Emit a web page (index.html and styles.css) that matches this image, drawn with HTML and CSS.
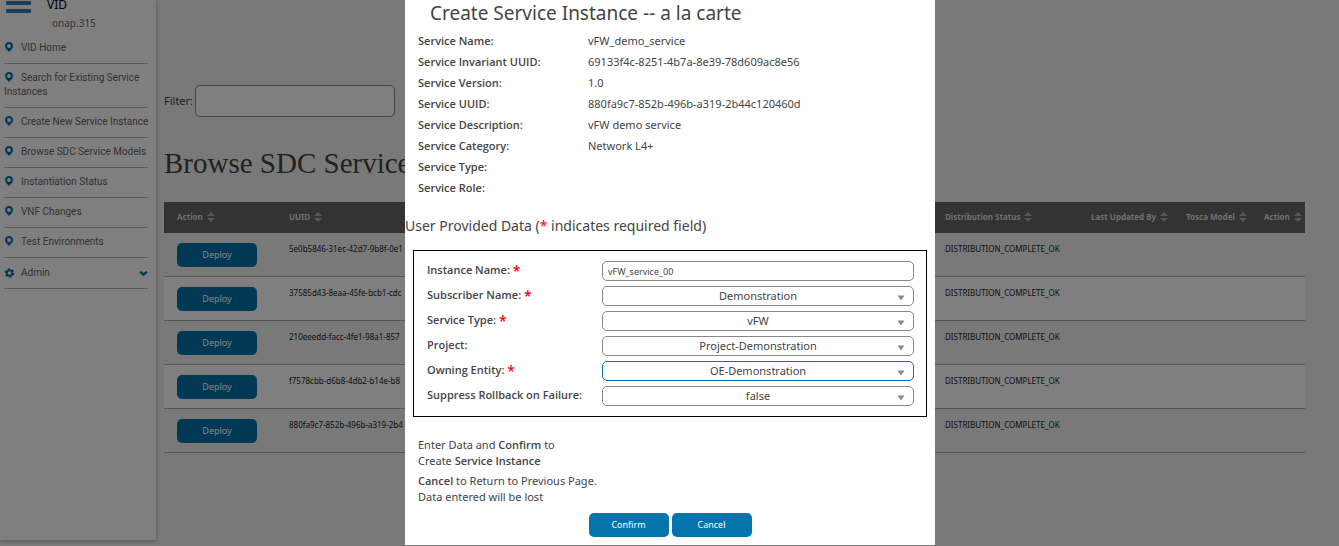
FILE: index.html
```html
<!DOCTYPE html>
<html lang="en">
<head>
<meta charset="utf-8">
<title>VID</title>
<link rel="stylesheet" href="styles.css">
</head>
<body>
<svg class="defs" aria-hidden="true">
  <symbol id="pin" viewBox="0 0 10 12"><path fill-rule="evenodd" d="M5 1C2.700 1 1 2.700 1 4.900C1 7.400 3.300 8.800 5 11C6.700 8.800 9 7.400 9 4.900C9 2.700 7.300 1 5 1ZM5 2.900A1.900 2 0 1 1 5 6.900A1.900 2 0 1 1 5 2.900Z"/></symbol>
  <symbol id="sort" viewBox="0 0 8 12"><path d="M4 1L8 5H0ZM0 7H8L4 11Z"/></symbol>
  <symbol id="arrow" viewBox="0 0 8 6"><path d="M.5 .5H7.500L4 5.500Z"/></symbol>
</svg>
<div class="page">
  <aside class="sidebar">
    <header class="brand">
      <button class="burger" type="button" aria-label="Menu"><span></span><span></span><span></span></button>
      <div class="brand-name">VID</div>
      <div class="brand-user">onap.315</div>
    </header>
    <nav class="menu">
      <a href="#"><svg class="pin"><use href="#pin"/></svg>VID Home</a>
      <a href="#"><svg class="pin"><use href="#pin"/></svg>Search for Existing Service<br>Instances</a>
      <a href="#"><svg class="pin"><use href="#pin"/></svg>Create New Service Instance</a>
      <a href="#"><svg class="pin"><use href="#pin"/></svg>Browse SDC Service Models</a>
      <a href="#"><svg class="pin"><use href="#pin"/></svg>Instantiation Status</a>
      <a href="#"><svg class="pin"><use href="#pin"/></svg>VNF Changes</a>
      <a href="#"><svg class="pin"><use href="#pin"/></svg>Test Environments</a>
      <a class="admin" href="#"><svg class="pin gear" viewBox="0 0 12 12"><circle cx="6" cy="6" r="3" fill="none" stroke="#0574ac" stroke-width="2"/><circle cx="6" cy="6" r="4.300" fill="none" stroke="#0574ac" stroke-width="2" stroke-dasharray="2.250 2.250"/></svg><span>Admin</span><svg class="chevron" viewBox="0 0 8 6"><path d="M1 1.300L4 4L7 1.300"/></svg></a>
    </nav>
  </aside>
  <main class="content">
    <div class="filter"><label for="filter">Filter:</label><input id="filter" type="text"></div>
    <h1>Browse SDC Service</h1>
    <table class="models">
      <colgroup><col class="c-action"><col><col class="c-status"><col class="c-updated"><col class="c-tosca"><col class="c-last"></colgroup>
      <thead><tr>
        <th>Action<svg><use href="#sort"/></svg></th><th>UUID<svg><use href="#sort"/></svg></th><th>Distribution Status<svg><use href="#sort"/></svg></th><th>Last Updated By<svg><use href="#sort"/></svg></th><th>Tosca Model<svg><use href="#sort"/></svg></th><th>Action<svg><use href="#sort"/></svg></th>
      </tr></thead>
      <tbody>
        <tr><td><button class="btn" type="button">Deploy</button></td><td>5e0b5846-31ec-42d7-9b8f-0e1</td><td>DISTRIBUTION_COMPLETE_OK</td><td></td><td></td><td></td></tr>
        <tr><td><button class="btn" type="button">Deploy</button></td><td>37585d43-8eaa-45fe-bcb1-cdc</td><td>DISTRIBUTION_COMPLETE_OK</td><td></td><td></td><td></td></tr>
        <tr><td><button class="btn" type="button">Deploy</button></td><td>210eeedd-facc-4fe1-98a1-857</td><td>DISTRIBUTION_COMPLETE_OK</td><td></td><td></td><td></td></tr>
        <tr><td><button class="btn" type="button">Deploy</button></td><td>f7578cbb-d6b8-4db2-b14e-b8</td><td>DISTRIBUTION_COMPLETE_OK</td><td></td><td></td><td></td></tr>
        <tr><td><button class="btn" type="button">Deploy</button></td><td>880fa9c7-852b-496b-a319-2b4</td><td>DISTRIBUTION_COMPLETE_OK</td><td></td><td></td><td></td></tr>
      </tbody>
    </table>
  </main>
</div>
<div class="overlay">
  <div class="modal" role="dialog" aria-modal="true" aria-labelledby="title">
    <h2 id="title">Create Service Instance -- a la carte</h2>
    <dl class="info">
      <dt>Service Name:</dt><dd>vFW_demo_service</dd>
      <dt>Service Invariant UUID:</dt><dd>69133f4c-8251-4b7a-8e39-78d609ac8e56</dd>
      <dt>Service Version:</dt><dd>1.0</dd>
      <dt>Service UUID:</dt><dd>880fa9c7-852b-496b-a319-2b44c120460d</dd>
      <dt>Service Description:</dt><dd>vFW demo service</dd>
      <dt>Service Category:</dt><dd>Network L4+</dd>
      <dt>Service Type:</dt><dd></dd>
      <dt>Service Role:</dt><dd></dd>
    </dl>
    <h3>User Provided Data (<span class="req">*</span> indicates required field)</h3>
    <form class="fields">
      <label for="name">Instance Name: <span class="req">*</span></label>
      <input id="name" class="control" type="text" value="vFW_service_00">
      <label for="subscriber">Subscriber Name: <span class="req">*</span></label>
      <div class="pick"><select id="subscriber" class="control"><option>Demonstration</option></select><svg><use href="#arrow"/></svg></div>
      <label for="type">Service Type: <span class="req">*</span></label>
      <div class="pick"><select id="type" class="control"><option>vFW</option></select><svg><use href="#arrow"/></svg></div>
      <label for="project">Project:</label>
      <div class="pick"><select id="project" class="control"><option>Project-Demonstration</option></select><svg><use href="#arrow"/></svg></div>
      <label for="owner">Owning Entity: <span class="req">*</span></label>
      <div class="pick"><select id="owner" class="control active"><option>OE-Demonstration</option></select><svg><use href="#arrow"/></svg></div>
      <label for="rollback">Suppress Rollback on Failure:</label>
      <div class="pick"><select id="rollback" class="control"><option>false</option></select><svg><use href="#arrow"/></svg></div>
    </form>
    <div class="notes">
      <p>Enter Data and <b>Confirm</b> to<br>Create <b>Service Instance</b></p>
      <p><b>Cancel</b> to Return to Previous Page.<br>Data entered will be lost</p>
    </div>
    <div class="actions"><button class="btn" type="button">Confirm</button><button class="btn" type="button">Cancel</button></div>
  </div>
</div>
</body>
</html>
```
FILE: styles.css
```css
* { box-sizing: border-box; }
html, body { height: 100%; }
body {
  margin: 0;
  overflow: hidden;
  background: #f2f2f2;
  color: #444;
  font: 11px/16px "Noto Sans", sans-serif;
}
button, input, select { font-family: inherit; color: inherit; }
h1, h2, h3, p, dl, dd { margin: 0; }
.defs { position: absolute; width: 0; height: 0; }

.page { display: flex; height: 100%; }
.sidebar {
  flex: none;
  width: 156px;
  margin-bottom: 6px;
  padding: 0 8px 0 4px;
  background: #fff;
  box-shadow: 0 1px 4px rgba(0, 0, 0, .3);
}
.brand {
  display: grid;
  grid-template-columns: 43px 1fr;
  grid-template-rows: 13px 21px;
  color: #666;
  font-size: 10px;
}
.burger {
  display: flex;
  flex-direction: column;
  justify-content: flex-end;
  gap: 4px;
  width: 25px;
  height: 13px;
  margin: 0 0 0 2px;
  padding: 0;
  border: 0;
  background: none;
}
.burger span { flex: none; height: 4px; border-radius: 1px; background: #3b7ab8; }
.brand-name { color: #000; font-size: 12px; line-height: 10px; }
.brand-user { grid-column: 2; padding-left: 5px; line-height: 20px; }
.menu a {
  display: block;
  padding: 7px 0 8px;
  border-bottom: 1px solid #b4b4b4;
  color: #666;
  font-family: Roboto, sans-serif;
  font-size: 10px;
  line-height: 14px;
  text-decoration: none;
  white-space: nowrap;
}
.pin { width: 10px; height: 12px; margin-right: 7px; fill: #0574ac; vertical-align: top; }
.menu .admin { display: flex; align-items: center; padding: 8px 0; }
.gear { width: 11px; margin-right: 6px; }
.chevron { width: 9px; height: 7px; margin-left: auto; fill: none; stroke: #0574ac; stroke-width: 2; }

.content { flex: 1; padding: 85px 34px 0 8px; }
.filter { display: flex; align-items: center; gap: 2px; }
.filter input {
  width: 200px;
  height: 32px;
  border: 1px solid #888;
  border-radius: 5px;
  background: #fff;
}
.content h1 {
  margin: 29px 0 22px;
  font: 29px/34px "Liberation Serif", serif;
}
.models { width: 100%; border-collapse: collapse; table-layout: fixed; font-size: 8px; }
.c-action { width: 112px; }
.c-status { width: 146px; }
.c-updated { width: 95px; }
.c-tosca { width: 78px; }
.c-last { width: 54px; }
.models th {
  height: 31px;
  padding: 0 0 2px 13px;
  background: #666;
  color: #ddd;
  text-align: left;
  white-space: nowrap;
}
.models th svg { width: 8px; height: 12px; margin-left: 4px; fill: #aaa; vertical-align: middle; }
.models td {
  padding: 10px 0 9px 13px;
  border-bottom: 1px solid #aaa;
  color: #222;
  line-height: 12px;
  vertical-align: top;
}
.models tbody tr:nth-child(even) { background: #fff; }
.btn {
  display: block;
  width: 80px;
  height: 24px;
  padding: 0 0 1px;
  border: 0;
  border-radius: 5px;
  background: #0574ac;
  color: #fff;
  font-size: 9px;
}

.overlay { position: fixed; inset: 0; padding-left: 1px; background: rgba(0, 0, 0, .5); }
.modal { width: 530px; margin: 0 auto; padding-bottom: 8px; background: #fff; }
.modal h2 { padding: 0 25px 4px; font-size: 19px; font-weight: 400; line-height: 26px; }
.info {
  display: grid;
  grid-template-columns: 170px 1fr;
  grid-auto-rows: 21px;
  padding: 0 13px;
  line-height: 21px;
}
.info dt, .fields label, .notes b { font-weight: 600; font-family: "Open Sans", sans-serif; }
.modal h3 { padding: 17px 0 14px; font-size: 14px; font-weight: 400; line-height: 21px; }
.req { color: #f00; }
.fields {
  display: grid;
  grid-template-columns: 175px 1fr;
  row-gap: 5px;
  margin: 0 8px 20px;
  padding: 10px 12px 10px 13px;
  border: 1px solid #000;
}
.fields label { line-height: 18px; }
.fields .req { font-size: 14px; line-height: 14px; vertical-align: middle; }
.control {
  display: block;
  width: 100%;
  height: 20px;
  padding: 0 5px;
  border: 1px solid #888;
  border-radius: 5px;
  background: #fff;
  font-size: 9px;
}
select.control { appearance: none; padding-bottom: 1px; font-size: 11px; text-align: center; text-align-last: center; }
.control.active { border-color: #0574ac; }
.pick { position: relative; }
.pick svg { position: absolute; right: 9px; top: 9px; width: 8px; height: 6px; fill: #888; pointer-events: none; }
.notes { padding: 0 13px; }
.notes p { margin-bottom: 4px; }
.actions { display: flex; justify-content: center; gap: 3px; padding-top: 4px; }
```
